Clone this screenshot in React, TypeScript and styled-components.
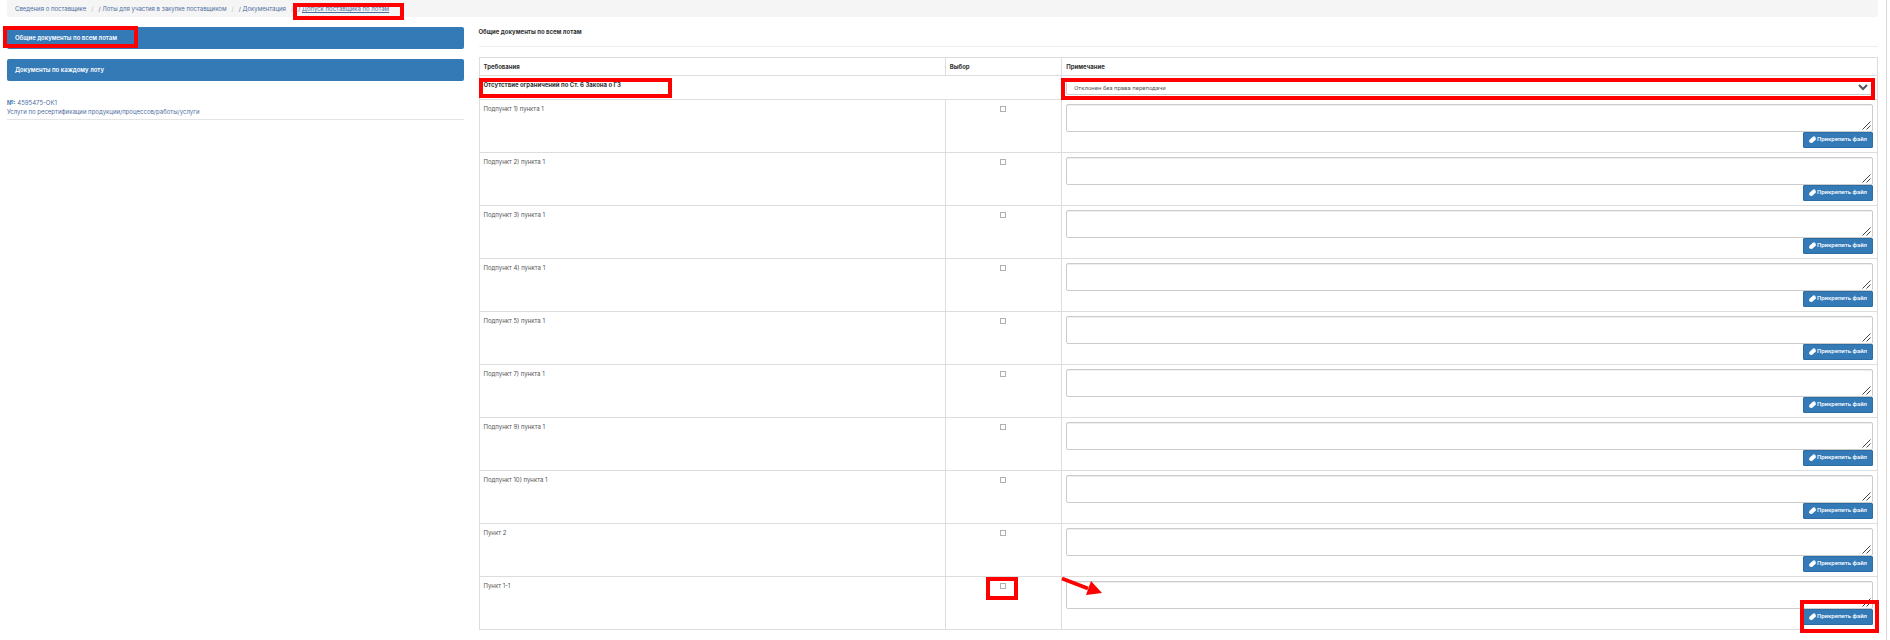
import React from "react";
import styled, { createGlobalStyle, css } from "styled-components";

const GlobalStyle = createGlobalStyle`
  * { box-sizing: border-box; }
  body {
    margin: 0;
    background: #fff;
    color: #333;
    font: 6px/10px Inter, Arial, sans-serif;
  }
`;

const Page = styled.div`
  position: relative;
  min-height: 100vh;
  margin-right: 3px;
  border-right: 1px solid #d8d8d8;
`;

const Breadcrumb = styled.nav`
  margin: 0 8px 10px 7px;
  padding: 4px 8px 3px;
  background: #f5f5f5;
  border-radius: 0 0 2px 2px;
`;

const Crumbs = styled.ol`
  display: flex;
  gap: 5px;
  margin: 0;
  padding: 0;
  list-style: none;
  color: #4f6e9f;
`;

const Crumb = styled.li`
  position: relative;
  white-space: pre;

  & + &::before {
    content: "/";
    margin-right: 5px;
    color: #bbb;
  }
`;

const CrumbLink = styled.a<{ $current?: boolean }>`
  color: #4f6e9f;
  text-decoration: ${(p) => (p.$current ? "underline" : "none")};
`;

const Columns = styled.div`
  display: grid;
  grid-template-columns: 25% 75%;
`;

const Sidebar = styled.aside`
  padding: 0 8px 0 7px;
`;

const Main = styled.main`
  padding: 0 8px 0 7px;
`;

const NavButton = styled.button`
  position: relative;
  display: block;
  width: 100%;
  height: 22px;
  margin-bottom: 10px;
  padding: 0 8px;
  border: 0;
  border-radius: 2px;
  background: #337ab7;
  color: #fff;
  font: 600 6px/10px Inter, Arial, sans-serif;
  text-align: left;
`;

const Lot = styled.a`
  display: block;
  margin-top: 17px;
  padding-bottom: 2px;
  border-bottom: 1px solid #e4e4e4;
  color: #4f6e9f;
  line-height: 10px;
  text-decoration: none;
`;

const LotNumber = styled.span`
  display: block;
  line-height: 9px;

  b { color: #23619c; }
`;

const Title = styled.h1`
  margin: 0 0 10px;
  padding-bottom: 9px;
  border-bottom: 1px solid #eee;
  font: bold 6px/10px Inter, Arial, sans-serif;
`;

const Table = styled.table`
  width: 100%;
  border-collapse: collapse;
  table-layout: fixed;

  th, td {
    padding: 4px;
    border: 1px solid #ddd;
    text-align: left;
    vertical-align: top;
  }

  thead th {
    padding-bottom: 3px;
  }
`;

const HeadCell = styled.th<{ $width?: string }>`
  width: ${(p) => p.$width ?? "auto"};
`;

const Cell = styled.td`
  position: relative;
  color: #555;
`;

const GroupHead = styled.th`
  position: relative;
  height: 24px;
`;

const SelectBox = styled.div`
  position: relative;
  color: #555;

  svg {
    position: absolute;
    right: 5px;
    top: 4px;
    pointer-events: none;
  }
`;

const Select = styled.select`
  display: block;
  width: 100%;
  height: 15px;
  padding: 0 7px;
  appearance: none;
  border: 1px solid #ccc;
  border-radius: 2px;
  background: #fff;
  color: #555;
  font: 6px/10px Roboto, Arial, sans-serif;
`;

const Tick = styled.input`
  appearance: none;
  display: block;
  width: 6px;
  height: 6px;
  margin: 2px auto 0;
  border: 1px solid #b0b0b0;
  background: #fff;
`;

const Note = styled.div`
  position: relative;

  svg {
    position: absolute;
    right: 2px;
    bottom: 2px;
    pointer-events: none;
  }
`;

const NoteField = styled.textarea`
  display: block;
  width: 100%;
  height: 28px;
  padding: 3px 6px;
  resize: none;
  border: 1px solid #ccc;
  border-radius: 2px;
  box-shadow: inset 0 1px 0 #eee;
  font: 6px/10px Inter, Arial, sans-serif;
`;

const AttachButton = styled.button`
  position: relative;
  display: flex;
  align-items: center;
  justify-content: center;
  gap: 1px;
  width: 70px;
  height: 16px;
  margin-left: auto;
  padding: 0 0 2px;
  border: 1px solid #2e6da4;
  border-radius: 1px;
  background: #337ab7;
  color: #fff;
  font: 500 6px/10px Roboto, Arial, sans-serif;
  white-space: nowrap;
`;

const marks = {
  crumb: css`left: 2px; right: -15px; top: -1px; height: 17px;`,
  nav: css`left: -4px; top: -1px; width: 135px; height: 22px;`,
  group: css`left: -1px; top: 2px; width: 193px; height: 20px;`,
  select: css`left: -5px; right: -2px; top: -2px; height: 22px;`,
  tick: css`left: 40px; top: 0; width: 32px; height: 23px;`,
  attach: css`left: -4px; right: -7px; top: -10px; height: 33px;`,
};

const Mark = styled.span<{ $on: keyof typeof marks }>`
  position: absolute;
  z-index: 1;
  border: 4px solid #f00;
  pointer-events: none;
  ${(p) => marks[p.$on]}
`;

const Arrow = styled.svg`
  position: absolute;
  z-index: 1;
  left: -1px;
  top: -1px;
  pointer-events: none;
`;

const crumbs = [
  "Сведения о поставщике",
  "/ Лоты для участия в закупке поставщиком",
  "/ Документация",
];

const rows = [
  "Подпункт 1) пункта 1",
  "Подпункт 2) пункта 1",
  "Подпункт 3) пункта 1",
  "Подпункт 4) пункта 1",
  "Подпункт 5) пункта 1",
  "Подпункт 7) пункта 1",
  "Подпункт 9) пункта 1",
  "Подпункт 10) пункта 1",
  "Пункт 2",
  "Пункт 1-1",
];

const Clip = () => (
  <svg width="7" height="7" viewBox="0 0 14 14" fill="none" stroke="#fff" strokeWidth="2.400" strokeLinecap="round" aria-hidden="true">
    <path d="M9 4 4 9c-1 1.500 1 2.500 2 1.500L11.500 5c1.500-2-1-4-3-2.500L2 8.500c-2 3 2 5.500 4.500 3.500L13 6" />
  </svg>
);

interface RequirementProps {
  name: string;
  marked: boolean;
}

const Requirement = ({ name, marked }: RequirementProps) => (
  <tr>
    <Cell>{name}</Cell>
    <Cell>
      <Tick type="checkbox" aria-label={name} />
      {marked && <Mark $on="tick" />}
    </Cell>
    <Cell>
      <Note>
        <NoteField aria-label={`Примечание: ${name}`} />
        <svg width="9" height="9" viewBox="0 0 9 9" stroke="#444" aria-hidden="true">
          <path d="M0.500 8.500 8.500 0.500M4.500 8.500 8.500 4.500" />
        </svg>
      </Note>
      <AttachButton type="button">
        <Clip />
        Прикрепить файл
        {marked && <Mark $on="attach" />}
      </AttachButton>
      {marked && (
        <Arrow width="44" height="24" viewBox="0 0 44 24" aria-hidden="true">
          <path d="M1 2.500 27 12.500" stroke="#f00" strokeWidth="4" />
          <path d="M30 5 41 17 25 19Z" fill="#f00" />
        </Arrow>
      )}
    </Cell>
  </tr>
);

export default function App() {
  return (
    <>
      <GlobalStyle />
      <Page>
        <Breadcrumb>
          <Crumbs>
            {crumbs.map((text) => (
              <Crumb key={text}>
                <CrumbLink href="#">{text}</CrumbLink>
              </Crumb>
            ))}
            <Crumb>
              {"/ "}
              <CrumbLink href="#" $current>Допуск поставщика по лотам</CrumbLink>
              <Mark $on="crumb" />
            </Crumb>
          </Crumbs>
        </Breadcrumb>
        <Columns>
          <Sidebar>
            <NavButton type="button">
              Общие документы по всем лотам
              <Mark $on="nav" />
            </NavButton>
            <NavButton type="button">Документы по каждому лоту</NavButton>
            <Lot href="#">
              <LotNumber><b>№:</b> 4595475-ОК1</LotNumber>
              Услуги по ресертификации продукции/процессов/работы/услуги
            </Lot>
          </Sidebar>
          <Main>
            <Title>Общие документы по всем лотам</Title>
            <Table>
              <thead>
                <tr>
                  <HeadCell $width="33.333%">Требования</HeadCell>
                  <HeadCell $width="8.333%">Выбор</HeadCell>
                  <HeadCell>Примечание</HeadCell>
                </tr>
              </thead>
              <tbody>
                <tr>
                  <GroupHead colSpan={2}>
                    Отсутствие ограничений по Ст. 6 Закона о ГЗ
                    <Mark $on="group" />
                  </GroupHead>
                  <Cell>
                    <SelectBox>
                      <Select aria-label="Решение">
                        <option>Отклонен без права переподачи</option>
                      </Select>
                      <svg width="10" height="7" viewBox="0 0 10 7" fill="none" stroke="#555" strokeWidth="2" aria-hidden="true">
                        <path d="M1 1 5 5 9 1" />
                      </svg>
                      <Mark $on="select" />
                    </SelectBox>
                  </Cell>
                </tr>
                {rows.map((name, i) => (
                  <Requirement key={name} name={name} marked={i === rows.length - 1} />
                ))}
              </tbody>
            </Table>
          </Main>
        </Columns>
      </Page>
    </>
  );
}
